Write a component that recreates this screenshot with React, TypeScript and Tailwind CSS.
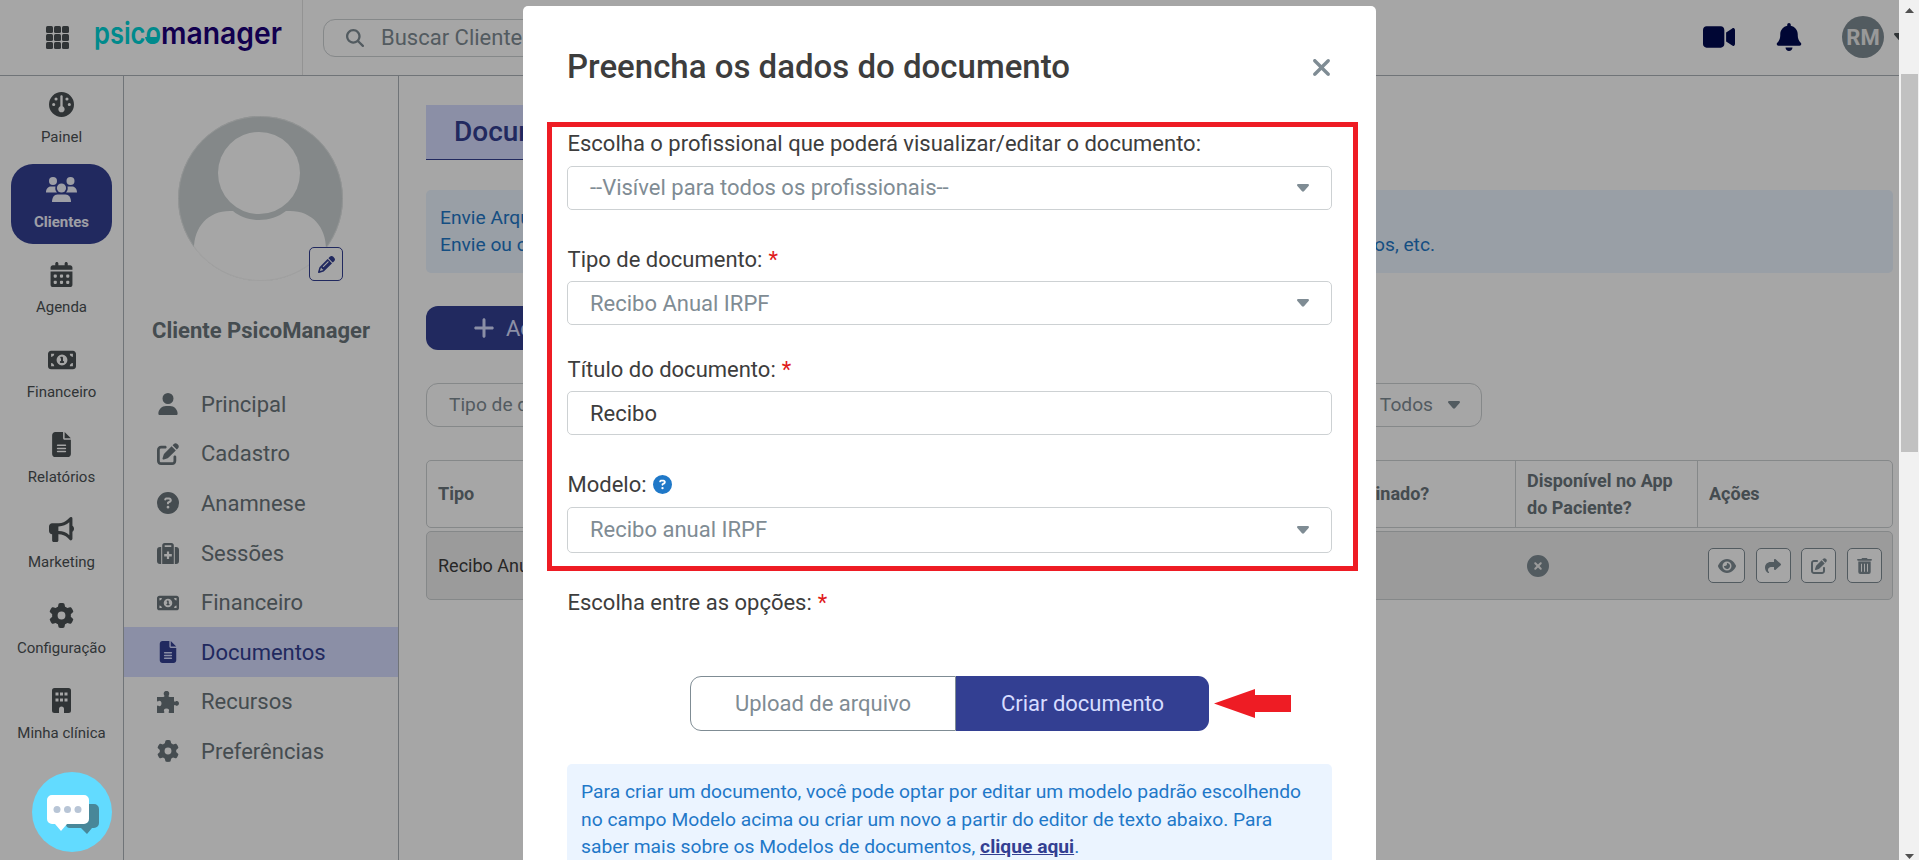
import type { ReactNode } from "react";
import {
  FaBell,
  FaBullhorn,
  FaCalendarDays,
  FaCircleQuestion,
  FaCircleXmark,
  FaEye,
  FaFileLines,
  FaGauge,
  FaGear,
  FaMagnifyingGlass,
  FaMoneyBill1,
  FaPencil,
  FaPenToSquare,
  FaPlus,
  FaShare,
  FaUser,
  FaVideo,
  FaXmark,
} from "react-icons/fa6";

const ClientsIcon = () => (
  <svg width="31" height="25" viewBox="0 0 31 25" fill="currentColor">
    <circle cx="7" cy="4" r="4" />
    <circle cx="24.5" cy="4" r="4" />
    <circle cx="15.5" cy="11" r="4.6" />
    <path d="M0 15.500C0 12 2 9.500 5 9.500h4.500c-.6 2.500 0 4.500 1.500 6z" />
    <path d="M31 15.500C31 12 29 9.500 26 9.500h-4.500c.6 2.500 0 4.500-1.500 6z" />
    <path d="M6 25c0-4.500 2-7.500 5.500-7.500h8c3.500 0 5.500 3 5.500 7.500z" />
  </svg>
);

const BuildingIcon = () => (
  <svg width="19" height="25" viewBox="0 0 19 25" fill="currentColor">
    <path
      fillRule="evenodd"
      d="M2.500 0h14A2.500 2.500 0 0 1 19 2.500v20a2.500 2.500 0 0 1-2.500 2.500H12v-4a2.500 2.500 0 0 0-5 0v4H2.500A2.500 2.500 0 0 1 0 22.500v-20A2.500 2.500 0 0 1 2.500 0zM3.500 4.500v3h3v-3zM8 4.500v3h3v-3zM12.500 4.500v3h3v-3zM3.500 10.500v3h3v-3zM8 10.500v3h3v-3zM12.500 10.500v3h3v-3z"
    />
  </svg>
);

const SuitcaseIcon = () => (
  <svg width="22" height="21" viewBox="0 0 22 21" fill="currentColor">
    <path d="M4.200 4v17H3a3 3 0 0 1-3-3V7a3 3 0 0 1 3-3zM17.800 4v17H19a3 3 0 0 0 3-3V7a3 3 0 0 0-3-3z" />
    <path
      fillRule="evenodd"
      d="M5.200 21V2.500A2.500 2.500 0 0 1 7.700 0h6.600a2.500 2.500 0 0 1 2.500 2.500V21zM7.700 2.200V4h6.600V2.200zM9.900 8.500v2.600H7.200v2.300h2.700V16h2.200v-2.600h2.700v-2.300h-2.700V8.500z"
    />
  </svg>
);

const PuzzleIcon = () => (
  <svg width="22" height="22" viewBox="0 0 22 22" fill="currentColor">
    <path d="M0 6h6.300c1.100 0 1.400-.7.900-1.700C6 2 7.200 0 9.500 0s3.500 2 2.300 4.300c-.5 1-.2 1.700.9 1.700H17v3.600c0 1 .6 1.300 1.400.8 1.800-1.200 3.600-.2 3.600 1.900s-1.800 3.100-3.600 1.900c-.8-.5-1.400-.2-1.400.8V22h-4.500c-.9 0-1.100-.7-.7-1.400.9-1.500.1-3-2.300-3s-3.200 1.500-2.300 3c.4.700.2 1.400-.7 1.400H0v-6.500c0-.9.600-1.100 1.300-.7 1.700 1 3.200-.3 3.200-2.300s-1.500-3.300-3.200-2.300c-.7.400-1.300.2-1.300-.7z" />
  </svg>
);

const TrashIcon = () => (
  <svg width="15" height="16" viewBox="0 0 15 16" fill="currentColor">
    <path d="M5.200 0h4.600l.9 1H14c.6 0 1 .3 1 .8s-.4.900-1 .9H1c-.6 0-1-.4-1-.9S.4 1 1 1h3.300z" />
    <path
      fillRule="evenodd"
      d="M1.300 3.600h12.400V14a2 2 0 0 1-2 2H3.300a2 2 0 0 1-2-2zM4 5.800v8h1v-8zM7 5.800v8h1v-8zM10 5.800v8h1v-8z"
    />
  </svg>
);

const GridIcon = () => (
  <svg width="23" height="23" viewBox="0 0 23 23" fill="#4b5154">
    {[0, 8, 16].map((y) =>
      [0, 8, 16].map((x) => (
        <rect key={`${x}-${y}`} x={x} y={y} width="7" height="7" rx="1.500" />
      ))
    )}
  </svg>
);

const Caret = () => (
  <svg width="12" height="8" viewBox="0 0 12 8" fill="currentColor">
    <path d="M1.200 0h9.600c1 0 1.500 1.200.8 1.900L7 7.200c-.6.600-1.400.600-2 0L.4 1.900C-.3 1.200.2 0 1.200 0z" />
  </svg>
);

const Logo = () => (
  <svg width="194" height="60" viewBox="0 0 194 60" className="ml-[26px]">
    <g fontFamily="Inter, sans-serif" fontWeight="600" fontSize="30">
      <text x="-1" y="37" fill="#00d4d8" textLength="67" lengthAdjust="spacingAndGlyphs">
        psico
      </text>
      <text x="66" y="37" fill="#1c007a" textLength="121" lengthAdjust="spacingAndGlyphs">
        manager
      </text>
    </g>
    <path d="M50 30h14c-1 4.500-3.500 7-7 7s-6-2.500-7-7z" fill="#00d4d8" />
  </svg>
);

const navItems: { label: string; icon: ReactNode }[] = [
  { label: "Painel", icon: <FaGauge size={25} /> },
  { label: "Clientes", icon: <ClientsIcon /> },
  { label: "Agenda", icon: <FaCalendarDays size={25} /> },
  { label: "Financeiro", icon: <FaMoneyBill1 size={28} /> },
  { label: "Relatórios", icon: <FaFileLines size={25} /> },
  { label: "Marketing", icon: <FaBullhorn size={25} /> },
  { label: "Configuração", icon: <FaGear size={25} /> },
  { label: "Minha clínica", icon: <BuildingIcon /> },
];

const clientMenu: { label: string; icon: ReactNode }[] = [
  { label: "Principal", icon: <FaUser size={22} /> },
  { label: "Cadastro", icon: <FaPenToSquare size={22} /> },
  { label: "Anamnese", icon: <FaCircleQuestion size={22} /> },
  { label: "Sessões", icon: <SuitcaseIcon /> },
  { label: "Financeiro", icon: <FaMoneyBill1 size={22} /> },
  { label: "Documentos", icon: <FaFileLines size={22} /> },
  { label: "Recursos", icon: <PuzzleIcon /> },
  { label: "Preferências", icon: <FaGear size={22} /> },
];

const Header = () => (
  <header className="flex h-[76px] shrink-0 items-center border-b border-[#adb3b8]">
    <div className="flex h-full w-[303px] shrink-0 items-center border-r border-[#e2e2e2] pb-px pl-[46px]">
      <GridIcon />
      <Logo />
    </div>
    <div className="ml-5 flex h-[38px] w-[560px] items-center rounded-xl border border-[#cdd1d3] pl-[22px] text-[22px] text-[#7f8c94]">
      <FaMagnifyingGlass size={18} className="mr-[17px]" />
      Buscar Cliente
    </div>
    <div className="ml-auto flex items-center pb-px">
      <FaVideo size={32} className="mr-10 text-[#000a50]" />
      <FaBell size={28} className="mr-[39px] text-[#000a50]" />
      <div className="flex h-[42px] w-[42px] items-center justify-center rounded-full bg-[#7f8c94] text-[22px] font-bold text-[#ececec]">
        RM
      </div>
      <div className="ml-2.5 w-[5px] overflow-hidden text-[#4b5154]">
        <Caret />
      </div>
    </div>
  </header>
);

const NavColumn = () => (
  <nav className="flex w-[124px] shrink-0 flex-col gap-[5.100px] border-r border-[#adb3b8] pt-[3px]">
    {navItems.map(({ label, icon }) => (
      <div
        key={label}
        className={
          label === "Clientes"
            ? "mx-[11px] flex h-20 flex-col items-center rounded-[22px] bg-[#333f92] pt-[13px] text-[15px] font-bold text-[#f3f4ff]"
            : "flex h-20 flex-col items-center pt-[13px] text-[15px] text-[#4b5154]"
        }
      >
        <div className="flex h-[25px] items-center">{icon}</div>
        <div className="mt-2 whitespace-nowrap leading-6">{label}</div>
      </div>
    ))}
  </nav>
);

const ClientColumn = () => (
  <aside className="w-[275px] shrink-0 border-r border-[#adb3b8] pt-10">
    <div className="relative ml-[54px] h-[165px] w-[165px]">
      <svg width="165" height="165" viewBox="0 0 165 165">
        <clipPath id="avatar">
          <circle cx="82.500" cy="82.500" r="82.500" />
        </clipPath>
        <g clipPath="url(#avatar)">
          <rect width="165" height="165" fill="#cbd2d3" />
          <path d="M16 165v-32c0-22 14-38 36-38h3c14 12 38 12 53 0h4c22 0 36 16 36 38v32z" fill="#fff" />
          <rect y="133" width="165" height="32" fill="#fff" />
          <circle cx="81" cy="57" r="41" fill="#fff" />
        </g>
        <circle cx="82.500" cy="82.500" r="82" fill="none" stroke="#eee" strokeWidth=".6" />
      </svg>
      <div className="absolute bottom-0 right-0 flex h-[34px] w-[34px] items-center justify-center rounded-[5px] border border-[#333f92] bg-white text-[#333f92]">
        <FaPencil size={17} />
      </div>
    </div>
    <div className="mt-[34px] h-8 text-center text-[22px] font-bold leading-8 text-[#6a757b]">
      Cliente PsicoManager
    </div>
    <div className="mt-8">
      {clientMenu.map(({ label, icon }) => (
        <div
          key={label}
          className={
            label === "Documentos"
              ? "flex h-[49.600px] items-center bg-[#d6dcff] pl-[33px] pt-px text-[22px] text-[#333f92]"
              : "flex h-[49.600px] items-center pl-[33px] pt-px text-[22px] text-[#6a757b]"
          }
        >
          <div className="mr-[22px] flex w-[22px] justify-center">{icon}</div>
          {label}
        </div>
      ))}
    </div>
  </aside>
);

const Main = () => (
  <main className="flex w-[1500px] shrink-0 flex-col items-start pl-[27px] pr-1.5 pt-[29px]">
    <div className="flex h-[55px] w-[215px] items-center border-b border-[#333f92] bg-[#d6dcff] pl-[28px] text-[28px] font-medium text-[#333f92]">
      Documentos
    </div>
    <div className="mt-[30px] flex h-[83px] w-full items-center justify-between rounded-[5px] bg-[#ebf4ff] pb-0.5 pl-[14px] pr-[458px] text-[19.200px] leading-[27px] text-[#1f78c8]">
      <div>
        Envie Arquivos, crie documentos e modelos
        <br />
        Envie ou crie documentos, contratos, recibos
      </div>
      <div className="self-end pb-[13px]">laudos, etc.</div>
    </div>
    <div className="mt-[33px] flex h-11 w-[230px] items-center rounded-xl bg-[#333f92] pl-[46px] text-[22px] text-[#d6dcff]">
      <FaPlus size={24} className="mr-2.5" />
      Adicionar
    </div>
    <div className="mt-[33px] flex w-full justify-between pr-[411px] text-[19.200px] text-[#7f8c94]">
      <div className="flex h-11 w-[280px] items-center rounded-xl border border-[#cdd1d3] pl-[22px]">
        Tipo de documento
      </div>
      <div className="flex h-11 w-[230px] items-center justify-end gap-[15px] rounded-xl border border-[#cdd1d3] pr-[21px]">
        Todos
        <Caret />
      </div>
    </div>
    <div className="mt-[33px] flex h-[68px] w-full items-stretch rounded-[5px] border border-[#cdd1d3] text-[18px] font-bold leading-[27px] text-[#6a757b]">
      <div className="flex w-[907px] items-center pb-px pl-[11px]">Tipo</div>
      <div className="flex w-[182px] items-center border-r border-[#cdd1d3] pb-px pl-[11px]">
        Assinado?
      </div>
      <div className="flex w-[182px] items-center border-r border-[#cdd1d3] pl-[11px]">
        Disponível no App
        <br />
        do Paciente?
      </div>
      <div className="flex items-center pb-px pl-[11px]">Ações</div>
    </div>
    <div className="mt-[3px] flex h-[69px] w-full items-center rounded-[5px] border border-[#cdd1d3] bg-[#efefef] text-[18px] text-[#3c3c3c]">
      <div className="w-[1100px] pl-[11px]">Recibo Anual IRPF</div>
      <div className="w-[181px] text-[#7f8c94]">
        <FaCircleXmark size={22} />
      </div>
      <div className="flex gap-[10.600px] text-[#7f8c94]">
        {[<FaEye size={18} />, <FaShare size={16} />, <FaPenToSquare size={16} />, <TrashIcon />].map(
          (icon, i) => (
            <div
              key={i}
              className="flex h-[35px] w-[35px] items-center justify-center rounded-[5px] border border-[#7f8c94] bg-white first:w-[37px]"
            >
              {icon}
            </div>
          )
        )}
      </div>
    </div>
  </main>
);

const Required = () => <span className="ml-1.5 text-[#e01b1b]">*</span>;

const label = "flex h-8 items-center pl-[0.500px] text-[22px] text-[#3d3d3d]";
const field =
  "flex w-full items-center justify-between rounded-[5px] border border-[#cdd1d3] pl-[22px] pr-[22px] text-[22px]";

const Modal = () => (
  <div className="absolute left-[523px] top-1.5 h-[854px] w-[853px] overflow-hidden rounded-t-[5px] bg-white pl-11 pr-11">
    <div className="flex h-[121px] items-start justify-between pt-10">
      <h1 className="whitespace-nowrap text-[33px] font-medium leading-[41px] text-[#3d3d3d]">
        Preencha os dados do documento
      </h1>
      <FaXmark size={27} className="mt-2 -mr-[3px] text-[#7f8c94]" />
    </div>
    <div className={label}>
      Escolha o profissional que poderá visualizar/editar o documento:
    </div>
    <div className={`${field} mt-[7px] h-11 pb-px text-[#7f8c94]`}>
      --Visível para todos os profissionais--
      <Caret />
    </div>
    <div className={`${label} mt-[33px]`}>
      Tipo de documento: <Required />
    </div>
    <div className={`${field} mt-1.5 h-11 text-[#7f8c94]`}>
      Recibo Anual IRPF
      <Caret />
    </div>
    <div className={`${label} mt-7`}>
      Título do documento: <Required />
    </div>
    <div className={`${field} mt-1.5 h-11 text-[#3d3d3d]`}>Recibo</div>
    <div className={`${label} mt-[33px]`}>
      Modelo: <FaCircleQuestion size={19} className="ml-1.5 text-[#1f78c8]" />
    </div>
    <div className={`${field} mt-[7px] h-[46px] pb-px text-[#7f8c94]`}>
      Recibo anual IRPF
      <Caret />
    </div>
    <div className={`${label} mt-[33px]`}>
      Escolha entre as opções: <Required />
    </div>
    <div className="ml-[123px] mt-[58px] flex h-[55px] w-[519px] text-[22px]">
      <div className="flex w-[266px] items-center justify-center rounded-l-[11px] border border-[#7f8c94] text-[#7f8c94]">
        Upload de arquivo
      </div>
      <div className="flex w-[253px] items-center justify-center rounded-r-[11px] bg-[#333f92] text-[#d6dcff]">
        Criar documento
      </div>
    </div>
    <div className="mt-[33px] h-[140px] whitespace-nowrap rounded-[5px] bg-[#ebf4ff] pl-3.5 pt-3.5 text-[19.250px] leading-[27.500px] text-[#1f78c8]">
      Para criar um documento, você pode optar por editar um modelo padrão escolhendo
      <br />
      no campo Modelo acima ou criar um novo a partir do editor de texto abaixo. Para
      <br />
      saber mais sobre os Modelos de documentos,{" "}
      <a className="font-bold text-[#333f92] underline">clique aqui</a>.
    </div>
  </div>
);

const ChatButton = () => (
  <svg
    width="80"
    height="80"
    viewBox="0 0 80 80"
    className="absolute left-8 top-[772px]"
  >
    <circle cx="40" cy="40" r="40" fill="#62dbff" />
    <path d="M38 32h24a5 5 0 0 1 5 5v14a5 5 0 0 1-5 5h-2l-5 6-6-6H38a4 4 0 0 1-4-4z" fill="#488799" />
    <path d="M20 23h32a5 5 0 0 1 5 5v19a5 5 0 0 1-5 5H35l-6 7-6-7h-3a5 5 0 0 1-5-5V28a5 5 0 0 1 5-5z" fill="#fff" />
    <g fill="#b8c5d6">
      <circle cx="25" cy="37.500" r="3.500" />
      <circle cx="35.500" cy="37.500" r="3.500" />
      <circle cx="46" cy="37.500" r="3.500" />
    </g>
  </svg>
);

const Scrollbar = () => (
  <div className="flex w-5 shrink-0 flex-col items-center bg-[#f1f1f1]">
    <svg width="9" height="5" viewBox="0 0 9 5" className="mt-2 ml-px">
      <path d="M0 5 4.500 0 9 5z" fill="#505050" />
    </svg>
    <div className="mt-[61px] h-[378px] w-[17px] bg-[#c1c1c1]" />
    <svg width="9" height="5" viewBox="0 0 9 5" className="mb-px ml-px mt-auto">
      <path d="M0 0 4.500 5 9 0z" fill="#505050" />
    </svg>
  </div>
);

const App = () => {
  return (
    <div className="flex h-[860px] w-[1919px] overflow-hidden bg-white font-['Roboto',sans-serif]">
      <div className="relative flex w-[1899px] shrink-0 flex-col overflow-hidden">
        <Header />
        <div className="flex flex-1">
          <NavColumn />
          <ClientColumn />
          <Main />
        </div>
        <div className="absolute inset-0 bg-black/35" />
        <Modal />
        <div className="absolute left-[547px] top-[122px] h-[449px] w-[811px] border-[5px] border-[#ee1c24]" />
        <svg
          width="77"
          height="29"
          viewBox="0 0 77 29"
          className="absolute left-[1214px] top-[689px]"
        >
          <path d="M0 14.500 41 0v6h36v17H41v6z" fill="#ee1c24" />
        </svg>
        <ChatButton />
      </div>
      <Scrollbar />
    </div>
  );
};

export default App;
